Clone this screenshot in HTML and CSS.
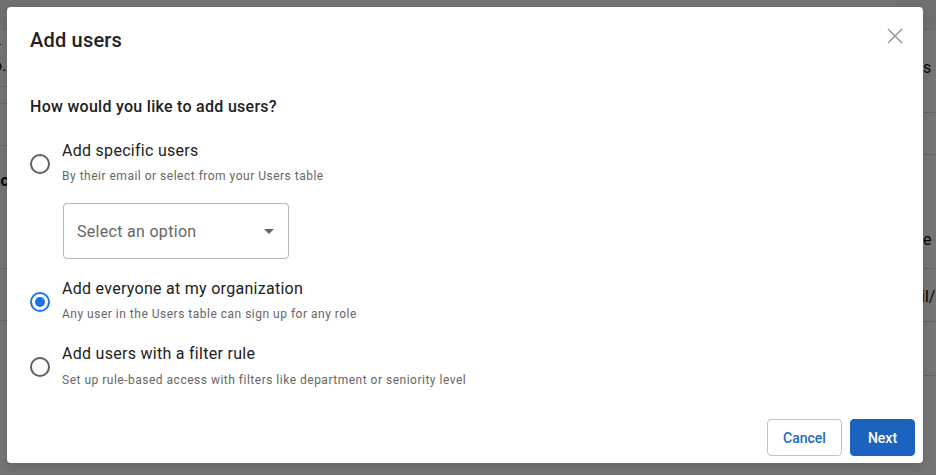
FILE: index.html
```html
<!DOCTYPE html>
<html lang="en">
<head>
<meta charset="utf-8">
<title>Add users</title>
<link rel="stylesheet" href="styles.css">
</head>
<body>
<div class="page">
  <div class="side side-left">
    <div class="band"></div>
    <div class="row r1"><span class="frag f-top">ir</span><span class="frag f-mid">o.</span></div>
    <div class="row r2"></div>
    <div class="row r3"></div>
    <div class="row r4"><span class="frag f-bold">ac</span></div>
    <div class="row r5"></div>
    <div class="row r6"></div>
  </div>
  <div class="side side-right">
    <div class="band"></div>
    <div class="row q1"><span class="frag">s</span></div>
    <div class="row q2"></div>
    <div class="row q3"><span class="frag">e</span></div>
    <div class="row q4"><span class="frag f-il">il/</span></div>
    <div class="row q5"></div>
    <div class="row q6"></div>
  </div>
</div>
<div class="overlay"></div>

<div class="modal" role="dialog" aria-labelledby="dlg-title">
  <div class="modal-header">
    <h2 id="dlg-title" class="modal-title">Add users</h2>
    <button class="close-btn" aria-label="Close">
      <svg width="16" height="16" viewBox="0 0 16 16"><path d="M1 1 L15 15 M15 1 L1 15" stroke="#9a9a9a" stroke-width="1.6" fill="none"/></svg>
    </button>
  </div>
  <div class="modal-body">
    <div class="question">How would you like to add users?</div>

    <label class="option option-1">
      <span class="radio"></span>
      <span class="option-text">
        <span class="option-label">Add specific users</span>
        <span class="option-sub">By their email or select from your Users table</span>
      </span>
    </label>

    <div class="select">
      <span class="select-text">Select an option</span>
      <span class="caret"></span>
    </div>

    <label class="option option-2">
      <span class="radio checked"></span>
      <span class="option-text">
        <span class="option-label">Add everyone at my organization</span>
        <span class="option-sub">Any user in the Users table can sign up for any role</span>
      </span>
    </label>

    <label class="option option-3">
      <span class="radio"></span>
      <span class="option-text">
        <span class="option-label">Add users with a filter rule</span>
        <span class="option-sub">Set up rule-based access with filters like department or seniority level</span>
      </span>
    </label>
  </div>
  <div class="modal-footer">
    <button class="btn btn-outline">Cancel</button>
    <button class="btn btn-primary">Next</button>
  </div>
</div>
</body>
</html>
```
FILE: styles.css
```css
* { box-sizing: border-box; }
html, body {
  margin: 0;
  padding: 0;
  width: 936px;
  height: 475px;
  overflow: hidden;
  font-family: Roboto, "Liberation Sans", Arial, sans-serif;
  background: #ffffff;
}

/* background page (under the overlay) */
.page {
  display: flex;
  justify-content: space-between;
  height: 475px;
}
.side {
  display: flex;
  flex-direction: column;
  width: 40px;
  background: #fff;
}
.band {
  height: 30px;
  background: #f4f4f4;
  border-bottom: 1px solid #e4e4e4;
}
.row {
  border-bottom: 1px solid #dcdcdc;
  color: #111;
  font-size: 16px;
}
.frag { display: block; }
.f-top { font-size: 12px; margin-top: 10px; line-height: 14px; color: #222; text-indent: -6px; }
.f-mid { font-size: 16px; line-height: 20px; margin-top: 2px; text-indent: -7px; }
.f-bold { font-weight: 700; margin-top: 25px; line-height: 20px; text-indent: -8px; }
.r1 { height: 57px; }
.r2 { height: 17px; }
.r3 { height: 42px; }
.r4 { height: 123px; }
.r5 { height: 52px; }
.r6 { height: 60px; border-bottom: none; }

.side-right .frag { padding-left: 27px; }
.side-right .frag.f-il { padding-left: 25px; }
.q1 { height: 83px; line-height: 20px; padding-top: 28px; }
.q2 { height: 42px; }
.q3 { height: 114px; padding-top: 75px; line-height: 20px; }
.q4 { height: 53px; padding-top: 18px; line-height: 20px; }
.q5 { height: 54px; }
.q6 { height: 60px; border-bottom: none; }

.overlay {
  position: absolute;
  inset: 0;
  background: rgba(0, 0, 0, 0.54);
}

/* modal */
.modal {
  position: absolute;
  left: 7px;
  top: 7px;
  width: 916px;
  height: 456px;
  background: #fff;
  border-radius: 4px;
  display: flex;
  flex-direction: column;
  box-shadow: 0 4px 12px rgba(0,0,0,0.15);
}
.modal-header {
  display: flex;
  justify-content: space-between;
  align-items: flex-start;
  padding: 21px 20px 0 23px;
}
.modal-title {
  margin: 0;
  font-size: 20px;
  line-height: 24px;
  font-weight: 500;
  letter-spacing: 0.2px;
  color: #212121;
}
.close-btn {
  border: none;
  background: none;
  padding: 0;
  width: 16px;
  height: 16px;
  cursor: pointer;
  display: flex;
}
.modal-body {
  flex: 1;
  padding: 0 23px;
  display: flex;
  flex-direction: column;
  align-items: flex-start;
}
.question {
  margin-top: 43px;
  font-size: 16px;
  line-height: 24px;
  font-weight: 500;
  letter-spacing: 0.28px;
  color: #212121;
}
.option {
  display: flex;
  align-items: center;
  gap: 12px;
  cursor: pointer;
}
.option-1 { margin-top: 20px; }
.option-2 { margin-top: 18px; }
.option-3 { margin-top: 19px; }
.option-3 .option-sub { margin-top: 5px; }
.radio {
  width: 20px;
  height: 20px;
  border: 2px solid #5f5f5f;
  border-radius: 50%;
  flex: none;
  margin-top: 3px;
  display: flex;
  align-items: center;
  justify-content: center;
}
.radio.checked { border-color: #1a73e8; }
.radio.checked::after {
  content: "";
  width: 10px;
  height: 10px;
  border-radius: 50%;
  background: #1a73e8;
}
.option-text {
  display: flex;
  flex-direction: column;
}
.option-label {
  font-size: 16px;
  line-height: 24px;
  letter-spacing: 0.28px;
  color: #212121;
}
.option-sub {
  margin-top: 4px;
  font-size: 12px;
  line-height: 18px;
  letter-spacing: 0.5px;
  color: #666;
}
.select {
  margin-top: 18px;
  margin-left: 33px;
  width: 226px;
  height: 56px;
  border: 1px solid #b5b5b5;
  border-radius: 4px;
  display: flex;
  align-items: center;
  justify-content: space-between;
  padding: 0 14px 0 13px;
}
.select-text {
  font-size: 16px;
  letter-spacing: 0.3px;
  color: #666;
}
.caret {
  width: 0;
  height: 0;
  border-left: 5px solid transparent;
  border-right: 5px solid transparent;
  border-top: 5px solid #666;
  margin-top: 1px;
}
.modal-footer {
  display: flex;
  justify-content: flex-end;
  gap: 8px;
  padding: 0 8px 7px;
}
.btn {
  height: 37px;
  border-radius: 4px;
  font-family: inherit;
  font-size: 14px;
  font-weight: 500;
  cursor: pointer;
}
.btn-outline {
  width: 75px;
  background: #fff;
  border: 1px solid #a9c6ee;
  color: #2566c4;
}
.btn-primary {
  width: 65px;
  background: #1c63c0;
  border: 1px solid #1c63c0;
  color: #fff;
}
```
